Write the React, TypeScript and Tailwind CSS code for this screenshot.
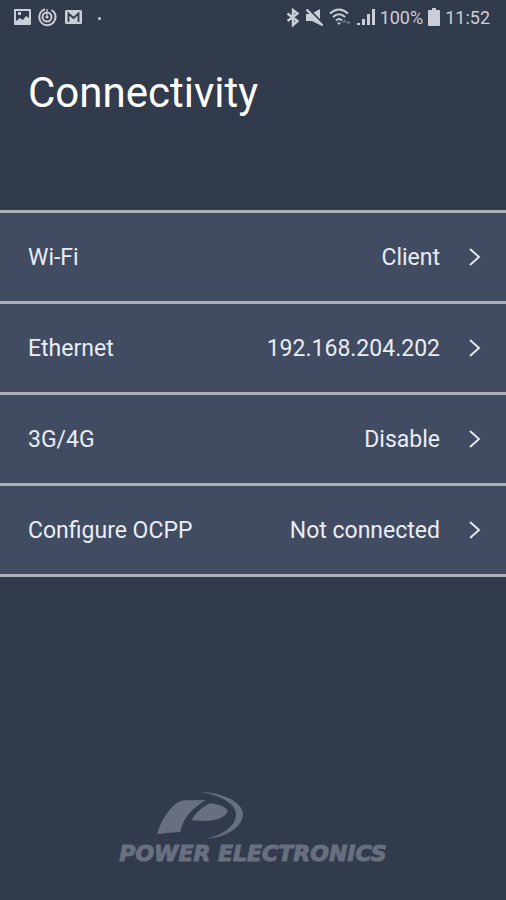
import React from "react";

const settings = [
  { name: "Wi-Fi", value: "Client", href: "#wifi" },
  { name: "Ethernet", value: "192.168.204.202", href: "#ethernet" },
  { name: "3G/4G", value: "Disable", href: "#mobile" },
  { name: "Configure OCPP", value: "Not connected", href: "#ocpp" },
];

function StatusBar() {
  return (
    <div className="flex justify-between items-center pr-4 pl-3 h-9 text-[#c9ced8]">
      <div className="flex items-center gap-1">
        <svg width="21" height="20" viewBox="0 0 21 20" aria-hidden="true">
          <path
            fill="currentColor"
            fillRule="evenodd"
            d="M3 1h15q1 0 1 1v14q0 1-1 1H3q-1 0-1-1V2q0-1 1-1zM4 3v10l4-3 3 2 3-4 3 2V3zM6 4h3v3H6z"
          />
        </svg>
        <svg
          width="20"
          height="20"
          viewBox="0 0 20 20"
          fill="none"
          stroke="currentColor"
          aria-hidden="true"
        >
          <path
            d="M8 1.2A8.2 8.2 0 0 0 10 17.2A8.2 8.2 0 0 0 14.500 2"
            strokeWidth="2"
          />
          <circle cx="10" cy="9" r="4.500" strokeWidth="2" />
          <circle cx="10" cy="9" r="1.600" fill="currentColor" stroke="none" />
          <path d="M10 9V1" strokeWidth="1.200" />
        </svg>
        <svg width="25" height="20" viewBox="0 0 25 20" aria-hidden="true">
          <rect x="4" y="2" width="17" height="14" rx="1.5" fill="currentColor" />
          <path
            d="M7.500 14V5.500l5 4.500 5-4.500V14"
            fill="none"
            stroke="#323b4c"
            strokeWidth="1.800"
          />
        </svg>
        <span className="bg-current ml-2 rounded-full w-[3px] h-[3px]"></span>
      </div>
      <div className="flex items-center gap-1">
        <svg
          width="14"
          height="20"
          viewBox="1 0 14 20"
          fill="none"
          stroke="currentColor"
          strokeWidth="2.400"
          aria-hidden="true"
        >
          <path d="M2.500 5.500l10 7.500-4.500 4V2l4.500 3.500-10 7.500" />
        </svg>
        <svg width="21" height="20" viewBox="0 0 21 20" aria-hidden="true">
          <path d="M2 6h5l9-5v16l-8-4H2z" fill="currentColor" />
          <path d="M4 .5l16 16" stroke="#323b4c" strokeWidth="2" />
          <path d="M2.500 1.500l16 16" stroke="currentColor" strokeWidth="2.400" />
        </svg>
        <svg
          width="24"
          height="20"
          viewBox="0 0 24 20"
          fill="none"
          stroke="currentColor"
          strokeWidth="2"
          aria-hidden="true"
        >
          <path d="M1 5.500q9-8 18 0M4 9q6-5.500 12 0M7 12.500q3-3 6 0" />
          <path d="M8 14.500h4l-2 2.500z" fill="currentColor" stroke="none" />
          <path
            d="M13 14.500l2.500-3 2.500 3zM17 13.500h5l-2.500 3z"
            fill="currentColor"
            stroke="none"
            opacity="0.4"
          />
        </svg>
        <svg width="19" height="20" viewBox="0 0 19 20" fill="currentColor" aria-hidden="true">
          <path d="M0 15h3v2H0zM5 11h3v6H5zM10 6h3v11h-3zM15 1h3v16h-3z" />
        </svg>
        <span className="text-[18px] leading-5">100%</span>
        <svg width="14" height="20" viewBox="0 0 14 20" fill="currentColor" aria-hidden="true">
          <path d="M5 0h4v2h3q1 0 1 1v14q0 1-1 1H2q-1 0-1-1V3q0-1 1-1h3z" />
        </svg>
        <span className="text-[18px] leading-5">11:52</span>
      </div>
    </div>
  );
}

function Logo() {
  return (
    <div className="text-[#687080]">
      <svg
        className="ml-9"
        width="90"
        height="50"
        viewBox="135 30 270 150"
        fill="currentColor"
        aria-hidden="true"
      >
        <path d="M141 163C151 125 177 83 202 68Q211 62 225 61L287 61C252 82 220 110 211 156Q178 157 141 163z" />
        <path d="M245 121C254 100 275 82 300 70Q325 73 340 80Q355 88 352 96C344 113 315 124 282 123z" />
        <path d="M272 36C330 36 399 64 399 103C399 141 345 174 288 177C337 166 378 139 378 103C378 70 329 45 272 36z" />
      </svg>
      <p className="font-['DejaVu_Sans',sans-serif] font-bold text-[22px] italic leading-7 whitespace-nowrap [-webkit-text-stroke:1px]">
        POWER ELECTRONICS
      </p>
    </div>
  );
}

export default function App() {
  return (
    <div className="flex flex-col bg-[#323b4c] min-h-screen font-[Roboto,sans-serif] text-[#e9edf5]">
      <StatusBar />
      <header className="px-7 pt-8 h-[174px]">
        <h1 className="text-[42px] text-white leading-[50px]">Connectivity</h1>
      </header>
      <main>
        <ul className="border-[#a9b0b9] border-t-[3px]">
          {settings.map((item) => (
            <li key={item.name} className="border-[#a9b0b9] border-b-[3px]">
              <a
                href={item.href}
                className="flex items-center bg-[#414b61] pt-[2px] pr-6 pl-7 h-[88px] text-[23px] leading-7"
              >
                <span className="flex-1">{item.name}</span>
                <span>{item.value}</span>
                <svg
                  className="ml-7"
                  width="14"
                  height="20"
                  viewBox="0 0 14 20"
                  fill="none"
                  stroke="currentColor"
                  strokeWidth="1.800"
                  aria-hidden="true"
                >
                  <path d="M2 1l9 8-9 8" />
                </svg>
              </a>
            </li>
          ))}
        </ul>
      </main>
      <footer className="flex justify-center mt-auto pb-8">
        <Logo />
      </footer>
    </div>
  );
}
